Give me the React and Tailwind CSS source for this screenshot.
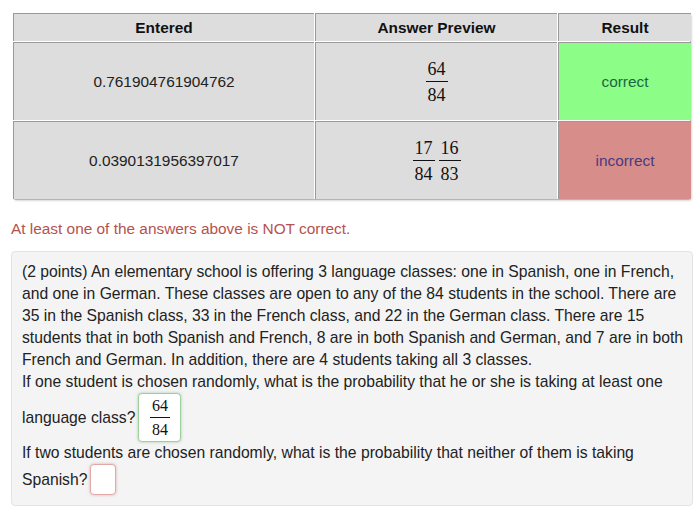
import React from "react";

function Frac({ num, den, size = "text-[18px]" }) {
  return (
    <span className={`inline-flex flex-col items-center leading-none font-['Liberation_Serif','DejaVu_Serif',serif] ${size} text-[#111]`}>
      <span className="px-[2px] pb-[3px]">{num}</span>
      <span className="self-stretch border-t border-[#111]" />
      <span className="px-[2px] pt-[4px]">{den}</span>
    </span>
  );
}

export default function App() {
  const cell = "bg-[#dddddd] border-l border-t border-[#9a9a9a] flex items-center justify-center";
  return (
    <div className="w-[700px] h-[513px] bg-white font-['Liberation_Sans',Arial,sans-serif] text-[15.4px] text-[#222] overflow-hidden">
      <div className="pt-[13px] pl-[13px]">
        <div className="w-[678px] grid grid-cols-[301px_242px_133px] grid-rows-[28px_78px_78px] gap-[1px] bg-white border-r border-b border-[#b5b5b5] rounded-[3px] shadow-[1px_1px_2px_rgba(0,0,0,0.15)]">
          <div className={`${cell} font-bold text-[#111]`}>Entered</div>
          <div className={`${cell} font-bold text-[#111]`}>Answer Preview</div>
          <div className={`${cell} font-bold text-[#111]`}>Result</div>

          <div className={cell}>0.761904761904762</div>
          <div className={cell}>
            <Frac num="64" den="84" />
          </div>
          <div className="bg-[#8cfe88] border-l border-t border-[#9a9a9a] flex items-center justify-center text-[#1d6642]">correct</div>

          <div className={cell}>0.0390131956397017</div>
          <div className={`${cell} gap-[4px]`}>
            <Frac num="17" den="84" />
            <Frac num="16" den="83" />
          </div>
          <div className="bg-[#d78e8b] border-l border-t border-[#9a9a9a] flex items-center justify-center text-[#4a3a7e]">incorrect</div>
        </div>
      </div>

      <p className="mt-[19px] ml-[11px] text-[#b5524e] leading-[20px]">At least one of the answers above is NOT correct.</p>

      <div className="mt-[12px] ml-[11px] w-[682px] bg-[#f4f4f4] border border-[#e3e3e3] rounded-[4px] pl-[10px] pr-[4px] pt-[9px] pb-[10px] leading-[22px] text-[15.7px] whitespace-nowrap">
        <p>
          (2 points) An elementary school is offering 3 language classes: one in Spanish, one in French,
          <br />
          and one in German. These classes are open to any of the 84 students in the school. There are
          <br />
          35 in the Spanish class, 33 in the French class, and 22 in the German class. There are 15
          <br />
          students that in both Spanish and French, 8 are in both Spanish and German, and 7 are in both
          <br />
          French and German. In addition, there are 4 students taking all 3 classes.
          <br />
          If one student is chosen randomly, what is the probability that he or she is taking at least one
        </p>
        <div className="flex items-center">
          <span>language class?</span>
          <span className="ml-[3px] inline-flex items-center justify-center w-[43px] h-[49px] bg-white border border-[#9fcf9f] rounded-[4px] shadow-[0_0_3px_rgba(80,170,80,0.5)]">
            <Frac num="64" den="84" size="text-[16px]" />
          </span>
        </div>
        <p>If two students are chosen randomly, what is the probability that neither of them is taking</p>
        <div className="flex items-center">
          <span>Spanish?</span>
          <span className="ml-[3px] inline-block w-[26px] h-[31px] bg-white border border-[#e3a9a9] rounded-[4px] shadow-[0_0_3px_rgba(200,90,90,0.45)]" />
        </div>
      </div>
    </div>
  );
}
